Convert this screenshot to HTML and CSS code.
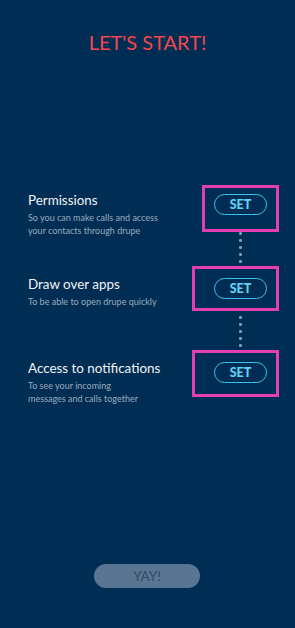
FILE: index.html
```html
<!DOCTYPE html>
<html lang="en">
<head>
<meta charset="utf-8">
<title>Let's start</title>
<link rel="stylesheet" href="styles.css">
</head>
<body>
<main class="screen">
  <h1 class="title">LET'S START!</h1>
  <section class="steps">
    <div class="step">
      <div class="step-text">
        <div class="step-title">Permissions</div>
        <div class="step-desc">So you can make calls and access<br>your contacts through drupe</div>
      </div>
      <div class="step-action">
        <button class="set-btn">SET<span class="hl hl-1"></span></button>
        <div class="dots"><i></i><i></i><i></i><i></i><i></i></div>
      </div>
    </div>
    <div class="step">
      <div class="step-text">
        <div class="step-title">Draw over apps</div>
        <div class="step-desc">To be able to open drupe quickly</div>
      </div>
      <div class="step-action">
        <button class="set-btn">SET<span class="hl hl-2"></span></button>
        <div class="dots"><i></i><i></i><i></i><i></i><i></i></div>
      </div>
    </div>
    <div class="step">
      <div class="step-text">
        <div class="step-title">Access to notifications</div>
        <div class="step-desc">To see your incoming<br>messages and calls together</div>
      </div>
      <div class="step-action">
        <button class="set-btn">SET<span class="hl hl-3"></span></button>
      </div>
    </div>
  </section>
  <div class="spacer"></div>
  <button class="yay-btn">YAY!</button>
</main>
</body>
</html>
```

FILE: styles.css
```css
html, body {
  margin: 0;
  padding: 0;
  background: #002d53;
}
.screen {
  height: 628px;
  display: flex;
  flex-direction: column;
  font-family: Lato, "Open Sans", sans-serif;
}
.title {
  margin: 0;
  padding-top: 29px;
  text-align: center;
  font-size: 20px;
  line-height: 26px;
  font-weight: 400;
  color: #f2474f;
}
.steps {
  margin-top: 136px;
  display: flex;
  flex-direction: column;
}
.step {
  height: 84px;
  display: flex;
  justify-content: space-between;
  padding: 0 28px;
}
.step-text {
  display: flex;
  flex-direction: column;
}
.step-title {
  font-size: 13.4px;
  line-height: 18px;
  color: #f1f4f7;
}
.step-desc {
  margin-top: 2px;
  font-size: 9px;
  line-height: 13px;
  color: #9aabbe;
}
.step-action {
  width: 53px;
  display: flex;
  flex-direction: column;
  align-items: center;
}
.set-btn {
  position: relative;
  margin-top: 3px;
  width: 53px;
  height: 21px;
  box-sizing: border-box;
  border: 1.5px solid #3fc0f0;
  border-radius: 11px;
  background: transparent;
  color: #62d2f8;
  font-family: Lato, "Open Sans", sans-serif;
  font-weight: 900;
  font-size: 12.5px;
  padding: 0;
  line-height: 18px;
}
.hl {
  position: absolute;
  box-sizing: border-box;
  border: 3px solid #e33fb3;
  pointer-events: none;
}
.hl-1 { left: -13px; top: -10px; width: 77px; height: 47px; }
.hl-2 { left: -23px; top: -13px; width: 87px; height: 45px; }
.hl-3 { left: -23px; top: -13px; width: 87px; height: 47px; }
.dots {
  margin-top: 17px;
  display: flex;
  flex-direction: column;
  gap: 4.5px;
}
.dots i {
  display: block;
  width: 2.5px;
  height: 2.5px;
  border-radius: 50%;
  background: #8a9bb0;
}
.spacer {
  flex: 1;
}
.yay-btn {
  align-self: center;
  margin: 0 0 40px -1px;
  width: 106px;
  height: 24px;
  border: none;
  border-radius: 12px;
  background: #5a7591;
  color: #2f4b69;
  font-family: Lato, "Open Sans", sans-serif;
  font-size: 13.5px;
  padding: 0;
}
```
